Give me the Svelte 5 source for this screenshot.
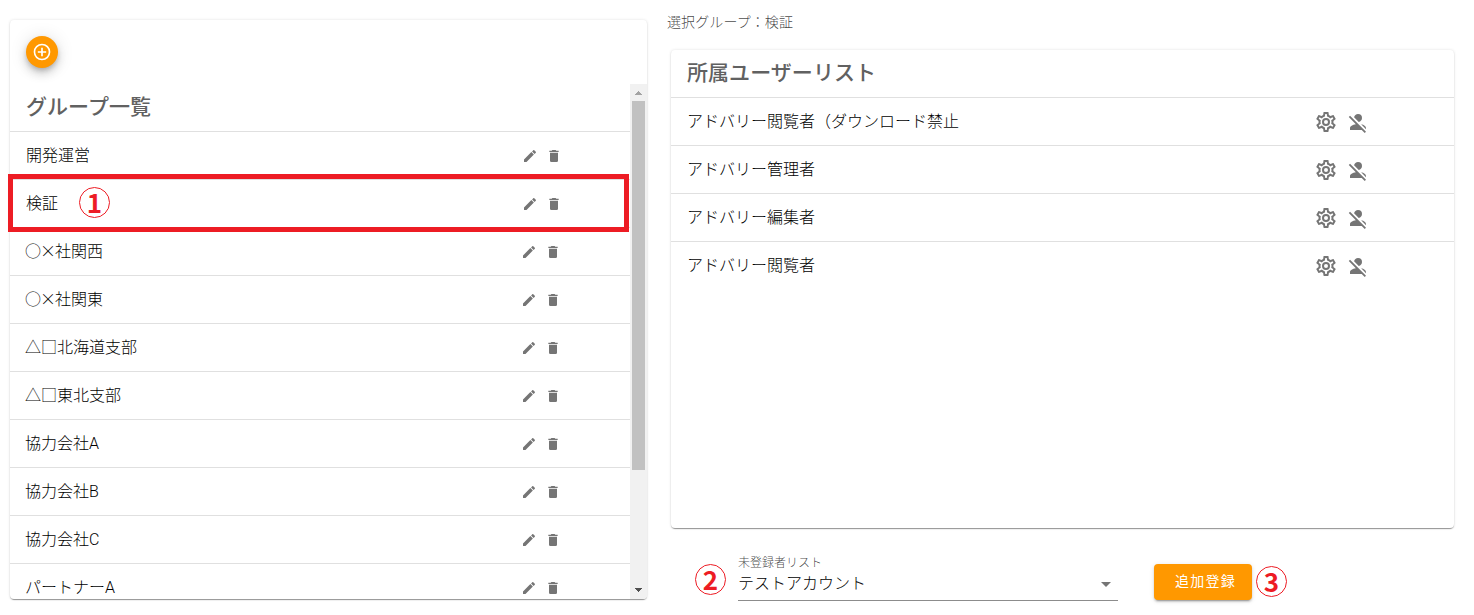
<script>
  const groups = ['開発運営', '検証', '○×社関西', '○×社関東', '△□北海道支部', '△□東北支部', '協力会社A', '協力会社B', '協力会社C', 'パートナーA'];
  const users = ['アドバリー閲覧者（ダウンロード禁止', 'アドバリー管理者', 'アドバリー編集者', 'アドバリー閲覧者'];
  const icons = {
    add: 'M12,20C7.59,20 4,16.41 4,12C4,7.59 7.59,4 12,4C16.41,4 20,7.59 20,12C20,16.41 16.41,20 12,20M12,2A10,10 0 0,0 2,12A10,10 0 0,0 12,22A10,10 0 0,0 22,12A10,10 0 0,0 12,2M13,7H11V11H7V13H11V17H13V13H17V11H13V7Z',
    pencil: 'M20.71,7.04C21.1,6.65 21.1,6 20.71,5.63L18.37,3.29C18,2.9 17.35,2.9 16.96,3.29L15.12,5.12L18.87,8.87M3,17.25V21H6.75L17.81,9.93L14.06,6.18L3,17.25Z',
    trash: 'M19,4H15.5L14.5,3H9.5L8.5,4H5V6H19M6,19A2,2 0 0,0 8,21H16A2,2 0 0,0 18,19V7H6V19Z',
    cog: 'M12,8A4,4 0 0,1 16,12A4,4 0 0,1 12,16A4,4 0 0,1 8,12A4,4 0 0,1 12,8M12,10A2,2 0 0,0 10,12A2,2 0 0,0 12,14A2,2 0 0,0 14,12A2,2 0 0,0 12,10M10,22C9.75,22 9.54,21.82 9.5,21.58L9.13,18.93C8.5,18.68 7.96,18.34 7.44,17.94L4.95,18.95C4.73,19.03 4.46,18.95 4.34,18.73L2.34,15.27C2.21,15.05 2.27,14.78 2.46,14.63L4.57,12.97L4.5,12L4.57,11L2.46,9.37C2.27,9.22 2.21,8.95 2.34,8.73L4.34,5.27C4.46,5.05 4.73,4.96 4.95,5.05L7.44,6.05C7.96,5.66 8.5,5.32 9.13,5.07L9.5,2.42C9.54,2.18 9.75,2 10,2H14C14.25,2 14.46,2.18 14.5,2.42L14.87,5.07C15.5,5.32 16.04,5.66 16.56,6.05L19.05,5.05C19.27,4.96 19.54,5.05 19.66,5.27L21.66,8.73C21.79,8.95 21.73,9.22 21.54,9.37L19.43,11L19.5,12L19.43,13L21.54,14.63C21.73,14.78 21.79,15.05 21.66,15.27L19.66,18.73C19.54,18.95 19.27,19.04 19.05,18.95L16.56,17.95C16.04,18.34 15.5,18.68 14.87,18.93L14.5,21.58C14.46,21.82 14.25,22 14,22H10M11.25,4L10.88,6.61C9.68,6.86 8.62,7.5 7.85,8.39L5.44,7.35L4.69,8.65L6.8,10.2C6.4,11.37 6.4,12.64 6.8,13.8L4.68,15.36L5.43,16.66L7.86,15.62C8.63,16.5 9.68,17.14 10.87,17.38L11.24,20H12.76L13.13,17.39C14.32,17.14 15.37,16.5 16.14,15.62L18.57,16.66L19.32,15.36L17.2,13.81C17.6,12.64 17.6,11.37 17.2,10.2L19.31,8.65L18.56,7.35L16.15,8.39C15.38,7.5 14.32,6.86 13.12,6.62L12.75,4H11.25Z',
    accountOff: 'M12,4A4,4 0 0,1 16,8C16,9.95 14.6,11.58 12.75,11.93L8.07,7.25C8.42,5.4 10.05,4 12,4M12.28,14L18.28,20L20,21.72L18.73,23L15.73,20H4V18C4,16.16 6.5,14.61 9.87,14.14L2.78,7.05L4.05,5.78L12.28,14M20,18V19.18L15.14,14.32C18,14.93 20,16.35 20,18Z'
  };
</script>

{#snippet icon(name, size)}
  <svg width={size} height={size} viewBox="0 0 24 24" fill="currentColor" aria-hidden="true"><path d={icons[name]} /></svg>
{/snippet}

<div class="page">
  <section class="card groups">
    <div class="toolbar"><button class="fab">{@render icon('add', 20)}</button></div>
    <div class="scroller">
      <div class="list">
        <h2>グループ一覧</h2>
        {#each groups as name, i}
          <div class="row" class:shifted={i > 1}>
            <span class="name">{#each name as ch}{#if ch === '×'}<span class="cross">{ch}</span>{:else}{ch}{/if}{/each}</span>
            <span class="actions">{@render icon('pencil', 16)}{@render icon('trash', 16)}</span>
            {#if i === 1}
              <div class="frame"></div>
              <span class="step step1">1</span>
            {/if}
          </div>
        {/each}
      </div>
      <div class="scrollbar">
        <svg width="17" height="17" viewBox="0 0 17 17" shape-rendering="crispEdges"><path d="M5 11h7L8.5 7z" fill="#a3a3a3" /></svg>
        <div class="thumb"></div>
        <svg class="down" width="17" height="17" viewBox="0 0 17 17" shape-rendering="crispEdges"><path d="M5 6h7L8.5 10z" fill="#505050" /></svg>
      </div>
    </div>
  </section>

  <section class="detail">
    <div class="selected">選択グループ：検証</div>
    <div class="card users">
      <h2>所属ユーザーリスト</h2>
      {#each users as name}
        <div class="row">
          <span class="name">{name}</span>
          <span class="actions">{@render icon('cog', 24)}{@render icon('accountOff', 24)}</span>
        </div>
      {/each}
    </div>
    <div class="form">
      <span class="step">2</span>
      <div class="select">
        <span class="label">未登録者リスト</span>
        <div class="value"><span>テストアカウント</span><i class="caret"></i></div>
      </div>
      <button class="submit">追加登録</button>
      <span class="step last">3</span>
    </div>
  </section>
</div>

<style>
  :global(body) { background: #fff; overflow: hidden; }
  .page {
    box-sizing: border-box;
    width: 1474px;
    height: 615px;
    display: flex;
    gap: 20px;
    padding-left: 10px;
    font-family: Roboto, "Noto Sans CJK JP", sans-serif;
    color: #000;
  }
  .card {
    background: #fff;
    border-radius: 4px;
    box-shadow: 0 3px 1px -2px rgba(0, 0, 0, 0.2), 0 1px 1px 0 rgba(0, 0, 0, 0.24), 0 0 3px 0 rgba(0, 0, 0, 0.12);
  }
  .groups { width: 637px; height: 579px; margin-top: 20px; display: flex; flex-direction: column; flex: none; }
  .toolbar { height: 64px; padding: 16px; box-sizing: border-box; flex: none; }
  .fab {
    width: 32px;
    height: 32px;
    padding: 0;
    border: 0;
    border-radius: 50%;
    display: grid;
    place-items: center;
    color: #fff;
    background: #ff9800;
    box-shadow: 0 3px 5px -1px rgba(0, 0, 0, 0.2), 0 6px 10px 0 rgba(0, 0, 0, 0.14), 0 1px 18px 0 rgba(0, 0, 0, 0.12);
  }
  .scroller { display: flex; height: 515px; }
  .list { width: 620px; height: 531px; clip-path: inset(0 -10px 16px -10px); border-radius: 4px; }
  h2 {
    box-sizing: border-box;
    height: 48px;
    margin: 0;
    padding: 0 16px;
    border-bottom: 1px solid #e0e0e0;
    font-size: 21px;
    line-height: 47px;
    font-weight: 500;
    letter-spacing: 0.05px;
    color: #616161;
  }
  .row {
    position: relative;
    box-sizing: border-box;
    height: 48px;
    padding: 0 68px 0 16px;
    border-bottom: 1px solid #e0e0e0;
    display: flex;
    align-items: center;
    justify-content: space-between;
    font-size: 16px;
    line-height: 24px;
    font-weight: 300;
  }
  .row:last-child { border-bottom-color: transparent; }
  .shifted { padding: 0 69px 0 15px; }
  .name { padding-top: 1px; white-space: nowrap; }
  .cross { font-family: "Noto Sans CJK JP", sans-serif; display: inline-block; width: 14px; text-indent: -1px; line-height: 20px; }
  .actions { display: flex; gap: 8px; color: #757575; padding-top: 1px; }
  svg { display: block; }
  .frame {
    position: absolute;
    left: -2px;
    top: -6px;
    width: 611px;
    height: 48px;
    border: 5px solid #ed1c24;
  }
  .scrollbar { width: 17px; height: 515px; background: #f1f1f1; border-radius: 0 0 4px 0; display: flex; flex-direction: column; }
  .thumb { width: 13px; height: 369px; margin-left: 2px; background: #c1c1c1; }
  .down { margin-top: auto; }
  .step {
    box-sizing: border-box;
    width: 31px;
    height: 31px;
    flex: none;
    border: 1px solid #ed1c24;
    border-radius: 50%;
    color: #ed1c24;
    font: 700 26px/27px "Noto Sans CJK JP", sans-serif;
    text-align: center;
  }
  .step1 { position: absolute; left: 69px; top: 7px; }
  .detail { display: flex; flex-direction: column; }
  .selected { height: 50px; line-height: 45px; font-size: 14px; font-weight: 300; letter-spacing: 0.1px; color: rgba(0, 0, 0, 0.75); }
  .users { width: 783px; height: 478px; margin-left: 4px; flex: none; }
  .users .row { padding: 0 84px 0 16px; }
  .form { display: flex; margin: 25px 0 0 28px; align-items: flex-start; }
  .form .step { margin-top: 11px; }
  .form .last { margin-top: 13px; }
  .select { width: 380px; height: 47px; margin: 0 36px 0 12px; border-bottom: 1px solid #8c8c8c; }
  .label { display: block; height: 20px; font-size: 12px; line-height: 20px; font-weight: 300; color: rgba(0, 0, 0, 0.75); }
  .value { display: flex; justify-content: space-between; align-items: center; height: 20px; font-size: 16px; line-height: 20px; font-weight: 300; padding-right: 7px; }
  .value span { padding-top: 2px; }
  .caret { border: 5px solid transparent; border-top-color: #757575; border-bottom: 0; margin-top: 2px; }
  .submit {
    width: 98px;
    height: 36px;
    margin: 11px 4px 0 0;
    padding: 0 0 2px 5px;
    border: 0;
    border-radius: 4px;
    background: #ff9800;
    color: #fff;
    font: 400 14px/32px Roboto, "Noto Sans CJK JP", sans-serif;
    letter-spacing: 1.25px;
    white-space: nowrap;
    box-shadow: 0 3px 1px -2px rgba(0, 0, 0, 0.2), 0 2px 2px 0 rgba(0, 0, 0, 0.14), 0 1px 5px 0 rgba(0, 0, 0, 0.12);
  }
</style>
